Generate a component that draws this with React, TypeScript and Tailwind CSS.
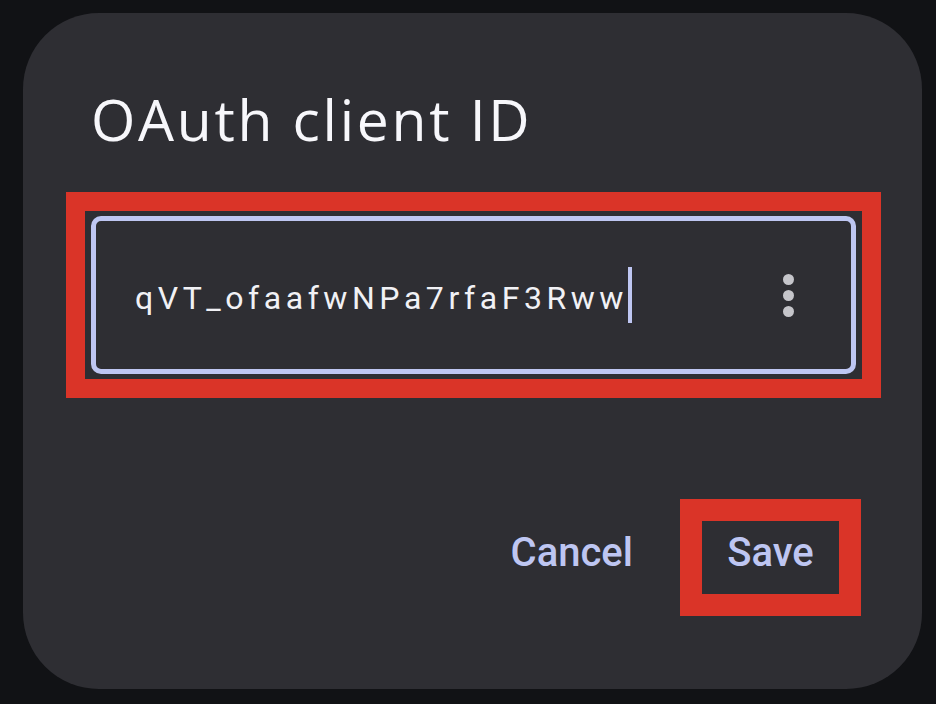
export default function App() {
  return (
    <div className="w-[936px] h-[704px] bg-[#111215] pt-[13px] pl-[23px] font-['Roboto',sans-serif]">
      <div className="w-[899px] h-[676px] rounded-[76px] bg-[#2e2e33] pt-[74px] pl-[43px] pr-[41px] flex flex-col">
        {/* Title */}
        <h2 className="ml-[25px] font-['Open_Sans',sans-serif] text-[57px] leading-[68px] font-normal text-[#f7f7fb] tracking-[2.7px] -mt-[2px] mb-[2px]">
          OAuth client ID
        </h2>

        {/* Highlighted input */}
        <div className="mt-[37px] border-[19px] border-[#da3428] px-[6px] py-[5px]">
          <div className="h-[158px] border-[5px] border-[#bec6f2] rounded-[10px] flex items-center pl-[39px] pr-[57px] pt-[6px]">
            <span className="text-[32px] leading-[38px] text-[#f1f1f5] tracking-[4.55px]">
              qVT_ofaafwNPa7rfaF3Rww
            </span>
            <span className="w-[4px] h-[56px] bg-[#bec6f2] -mt-[6px]" />
            <div className="ml-auto flex flex-col gap-[5px] -mt-[6px]">
              <span className="w-[11px] h-[11px] rounded-full bg-[#c5c5ca]" />
              <span className="w-[11px] h-[11px] rounded-full bg-[#c5c5ca]" />
              <span className="w-[11px] h-[11px] rounded-full bg-[#c5c5ca]" />
            </div>
          </div>
        </div>

        {/* Actions */}
        <div className="mt-[101px] pr-[20px] flex justify-end items-center">
          <div className="h-[117px] flex items-center pb-[10px] mr-[47px]">
            <span className="text-[40px] leading-[48px] font-medium text-[#bec6f2]">Cancel</span>
          </div>
          <div className="w-[181px] h-[117px] border-[22px] border-[#da3428] flex items-center justify-center pb-[10px]">
            <span className="text-[40px] leading-[48px] font-medium text-[#bec6f2]">Save</span>
          </div>
        </div>
      </div>
    </div>
  );
}
